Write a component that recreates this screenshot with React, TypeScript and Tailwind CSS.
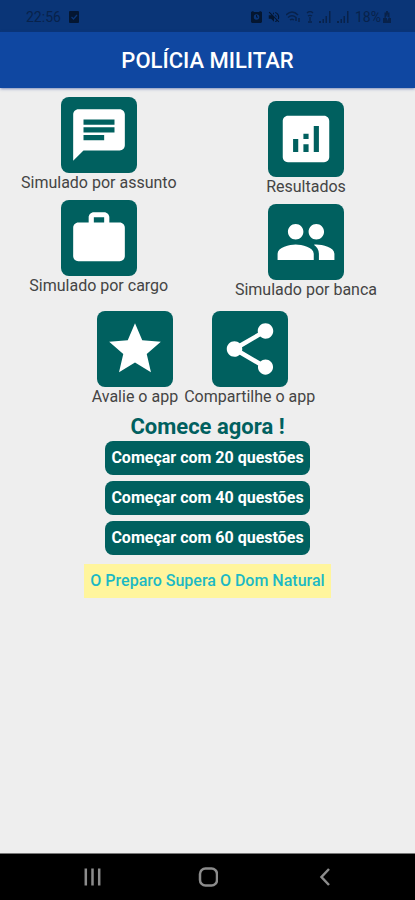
import type { IconType } from "react-icons";
import {
  MdAnalytics,
  MdChat,
  MdPeople,
  MdShare,
  MdStar,
  MdVolumeOff,
  MdWork,
} from "react-icons/md";

function Tile({ icon: Icon, label }: { icon: IconType; label: string }) {
  return (
    <button className="flex flex-col items-center text-base leading-5 text-[#444444]">
      <span className="flex size-[76px] items-center justify-center rounded-lg bg-[#00605f] text-white">
        <Icon size={62} />
      </span>
      {label}
    </button>
  );
}

function Signal() {
  return (
    <svg viewBox="0 0 13 12" className="h-3 w-[13px]" fill="currentColor">
      <path d="M0 10h2v2H0zM3.5 8h1.5v4H3.5zM6.5 5H8v7H6.5zM10 0h1.5v12H10z" />
    </svg>
  );
}

function StatusBar() {
  return (
    <div className="flex h-8 items-center justify-between bg-[#0a3577] pt-0.5 pr-6 pl-[26px] text-[#08224b]">
      <div className="flex items-center gap-2">
        <span className="text-sm">22:56</span>
        <svg viewBox="0 0 10 12" className="h-3 w-2.5 text-[#041631]">
          <rect width="10" height="12" rx="1" fill="currentColor" />
          <path d="M2.5 6l2 2 3.5-4" fill="none" stroke="#0a3577" strokeWidth="1.3" />
        </svg>
      </div>
      <div className="flex items-center gap-[5px]">
        <svg viewBox="0 0 11 12" className="h-3 w-[11px] text-[#041631]">
          <path d="M0 1l2-1 1 1h5l1-1 2 1v10l-1 1H1l-1-1z" fill="currentColor" />
          <circle cx="5.5" cy="6" r="2.8" fill="#0a3577" />
          <path d="M5.5 4v2.2H7" fill="none" stroke="currentColor" />
        </svg>
        <MdVolumeOff size={14} className="text-[#041631]" />
        <svg viewBox="0 0 15 12" className="h-3 w-[15px]" fill="none" stroke="currentColor" strokeWidth="1.5">
          <path d="M0 4c4-4 8-4 12 0M2 6.5c3-2.5 5-2.5 8 0M4 9c1.5-1 2.5-1 4 0M10 10V6M13 7v4" />
        </svg>
        <svg viewBox="0 0 8 12" className="h-3 w-2" fill="none" stroke="currentColor" strokeWidth="1.3">
          <path d="M1 2c2-2 4-2 6 0M2 5c1.5-1 2.5-1 4 0M4 6v4M2 11h4" />
        </svg>
        <Signal />
        <Signal />
        <span className="flex items-center gap-0.5 text-sm">
          18%
          <svg viewBox="0 0 8 12" className="h-3 w-2" fill="currentColor">
            <path d="M3 0h2v1.5h1.5V7H8v5H0V7h1.5V1.5H3z" />
            <path d="M4.5 3L2.5 7h1.5v3l2-4H4.5z" fill="#0a3577" />
          </svg>
        </span>
      </div>
    </div>
  );
}

function NavBar() {
  return (
    <nav className="flex h-[47px] items-center justify-between border-t border-[#777777] bg-black px-[82px] text-[#8c8c8c]">
      <button aria-label="Recentes">
        <svg viewBox="0 0 20 20" className="size-5" fill="none" stroke="currentColor" strokeWidth="2.5">
          <path d="M3.8 1.5v17M10.5 1.5v17M17.2 1.5v17" />
        </svg>
      </button>
      <button aria-label="Início">
        <svg viewBox="0 0 20 20" className="size-5" fill="none" stroke="currentColor" strokeWidth="2.5">
          <rect x="2" y="1.5" width="17" height="17" rx="5.5" />
        </svg>
      </button>
      <button aria-label="Voltar">
        <svg viewBox="0 0 20 20" className="size-5" fill="none" stroke="currentColor" strokeWidth="2.5">
          <path d="M16 2L8.5 10l7.5 8" />
        </svg>
      </button>
    </nav>
  );
}

export default function App() {
  return (
    <div className="flex min-h-screen flex-col bg-[#eeeeee] font-['Roboto',sans-serif]">
      <StatusBar />
      <header className="flex h-14 items-center justify-center bg-[#0f47a1] shadow-sm shadow-blue-900/40">
        <h1 className="text-[22px] font-medium text-white">POLÍCIA MILITAR</h1>
      </header>

      <main className="flex flex-1 flex-col items-center pt-[9px]">
        <div className="flex w-full justify-between pr-[38px] pl-[21px]">
          <div className="flex flex-col items-center gap-[7px]">
            <Tile icon={MdChat} label="Simulado por assunto" />
            <Tile icon={MdWork} label="Simulado por cargo" />
          </div>
          <div className="flex flex-col items-center gap-[7px] pt-1">
            <Tile icon={MdAnalytics} label="Resultados" />
            <Tile icon={MdPeople} label="Simulado por banca" />
          </div>
        </div>

        <div className="mt-[11px] flex gap-1.5 pr-2">
          <Tile icon={MdStar} label="Avalie o app" />
          <Tile icon={MdShare} label="Compartilhe o app" />
        </div>

        <h2 className="mt-1.5 text-[22px] leading-7 font-bold text-[#00605f]">Comece agora !</h2>
        <div className="flex flex-col gap-1.5">
          {[20, 40, 60].map((count) => (
            <button
              key={count}
              className="h-[34px] rounded-lg bg-[#00605f] px-1.5 text-base font-bold text-white"
            >
              Começar com {count} questões
            </button>
          ))}
        </div>
        <p className="mt-[9px] bg-[#fff59d] px-1.5 py-[5px] text-base font-medium text-[#1cb9c4]">
          O Preparo Supera O Dom Natural
        </p>
      </main>

      <NavBar />
    </div>
  );
}
